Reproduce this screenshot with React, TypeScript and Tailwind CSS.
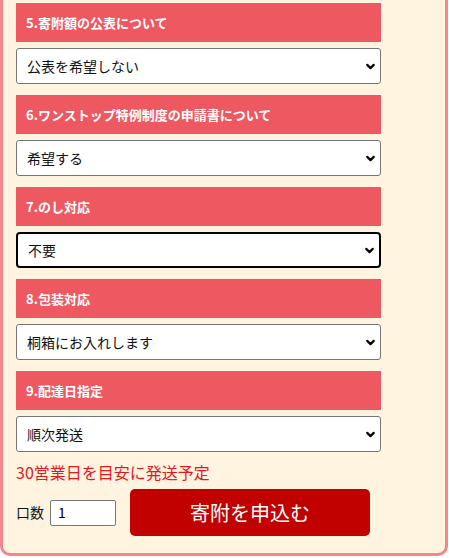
import { ChevronDown } from 'lucide-react';

const sections = [
    { title: "5.寄附額の公表について", value: "公表を希望しない", focused: false },
    { title: "6.ワンストップ特例制度の申請書について", value: "希望する", focused: false },
    { title: "7.のし対応", value: "不要", focused: true },
    { title: "8.包装対応", value: "桐箱にお入れします", focused: false },
    { title: "9.配達日指定", value: "順次発送", focused: false },
];

export default function App() {
    return (
        <div className="w-[449px] h-[558px] bg-white font-['Noto_Sans_CJK_JP','Noto_Sans',sans-serif]">
            <div className="w-[448px] bg-[#fff4df] border-x-[3px] border-b-[3px] border-[#f2868a] rounded-b-[10px] pt-[3px] pb-[17px] pl-[13px]">
                <div className="w-[365px]">
                    {sections.map((s, i) => (
                        <div key={i} className={i > 0 ? "mt-[11px]" : ""}>
                            {/* section header */}
                            <div className="h-[39px] bg-[#ee5860] flex items-center pl-[10px] text-white text-[13px] font-bold">
                                {s.title}
                            </div>
                            {/* select box */}
                            <div
                                className={
                                    "mt-[6px] h-[36px] bg-white flex items-center justify-between pl-[10px] pr-[3px] text-[14px] text-[#111] " +
                                    (s.focused ? "border-2 border-black rounded-[4px]" : "border border-[#767676] rounded-[3px]")
                                }
                            >
                                <span>{s.value}</span>
                                <ChevronDown size={13} strokeWidth={4} className="text-black" />
                            </div>
                        </div>
                    ))}

                    <p className="mt-[8px] text-[16px] leading-[24px] text-[#e5171f]">30営業日を目安に発送予定</p>

                    <div className="mt-[5px] flex items-center">
                        <span className="text-[14px] text-[#111] w-[34px]">口数</span>
                        <div className="w-[66px] h-[26px] bg-white border border-[#767676] rounded-[2px] flex items-center pl-[7px] text-[14px] text-black">
                            1
                        </div>
                        <button className="ml-[14px] w-[240px] h-[47px] bg-[#c10000] rounded-[5px] text-white text-[20px] flex items-center justify-center">
                            寄附を申込む
                        </button>
                    </div>
                </div>
            </div>
        </div>
    );
}
